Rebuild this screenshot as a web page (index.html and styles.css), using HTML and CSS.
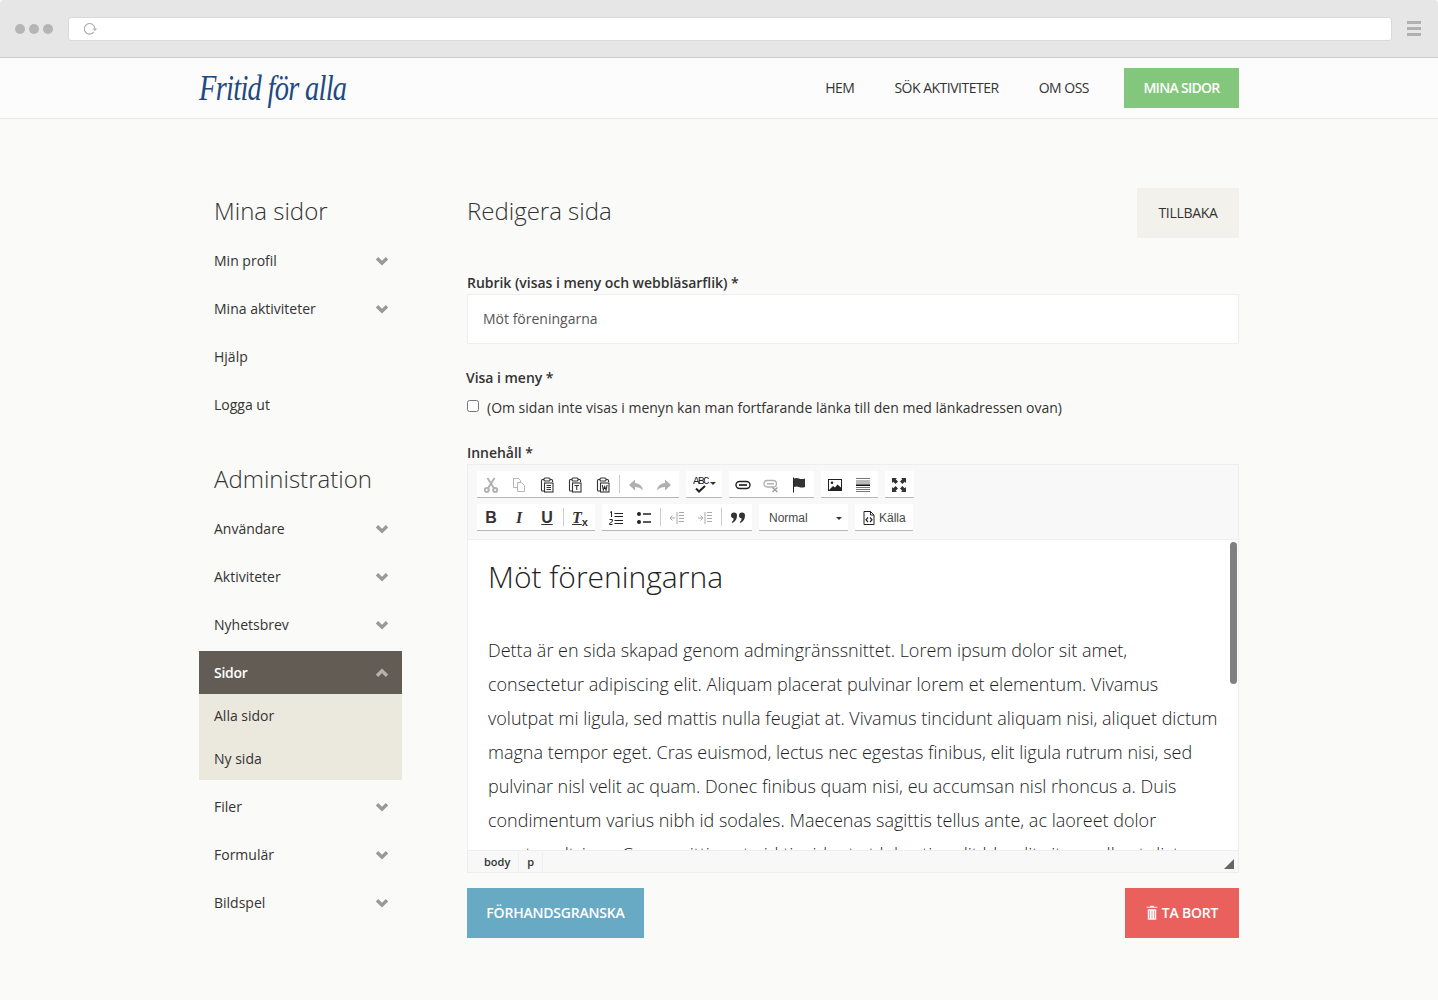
FILE: index.html
```html
<!DOCTYPE html>
<html lang="sv">
<head>
    <meta charset="UTF-8">
    <title>Redigera sida</title>
    <link rel="stylesheet" href="styles.css">
</head>
<body>
    <svg class="sprite" xmlns="http://www.w3.org/2000/svg">
        <symbol id="i-down" viewBox="0 0 14 10"><path d="M2 2.2l5 5 5-5" fill="none" stroke="currentColor" stroke-width="3.4"/></symbol>
        <symbol id="i-up" viewBox="0 0 14 10"><path d="M2 7.8l5-5 5 5" fill="none" stroke="currentColor" stroke-width="3.4"/></symbol>
        <symbol id="i-cut" viewBox="0 0 16 16"><g fill="none" stroke="#b0b0b0" stroke-width="1.9"><circle cx="3.800" cy="13" r="2"/><circle cx="12.200" cy="13" r="2"/><path d="M5 11.200L11.500 1M11 11.200L4.500 1"/></g></symbol>
        <symbol id="i-copy" viewBox="0 0 16 16"><g fill="#fff" stroke="#b5b5b5"><path d="M2.500 1.500h5l2 2v7h-7z"/><path d="M6.500 5.500h4l3 3v6h-7z"/></g></symbol>
        <symbol id="i-paste" viewBox="0 0 16 16"><g fill="none" stroke="#333" stroke-width="1.100"><path d="M5 2.500H3.500q-1 0-1 1V13q0 1 1 1H5M11 2.500h1.500q1 0 1 1V5"/><rect x="5" y="1" width="6" height="3" rx="1"/><rect x="5.500" y="6" width="8.500" height="9"/><path d="M7.500 8.500h4.500M7.500 10.500h4.500M7.500 12.500h4.500"/></g></symbol>
        <symbol id="i-paste-t" viewBox="0 0 16 16"><g fill="none" stroke="#333" stroke-width="1.100"><path d="M5 2.500H3.500q-1 0-1 1V13q0 1 1 1H5M11 2.500h1.500q1 0 1 1V5"/><rect x="5" y="1" width="6" height="3" rx="1"/><rect x="5.500" y="6" width="8.500" height="9"/><path d="M7.500 8.500h4.500M9.750 8.500v4.500"/></g></symbol>
        <symbol id="i-paste-w" viewBox="0 0 16 16"><g fill="none" stroke="#333" stroke-width="1.100"><path d="M5 2.500H3.500q-1 0-1 1V13q0 1 1 1H5M11 2.500h1.500q1 0 1 1V5"/><rect x="5" y="1" width="6" height="3" rx="1"/><rect x="5.500" y="6" width="8.500" height="9"/><path d="M7.300 8l1 5 1.400-3.500L11.100 13l1-5"/></g></symbol>
        <symbol id="i-undo" viewBox="0 0 16 16"><path d="M7 2.500L1 8l6 5.500V10c3 0 5.500.5 8 3.500-.5-4.500-3.500-7-8-7.500z" fill="#b0b0b0"/></symbol>
        <symbol id="i-redo" viewBox="0 0 16 16"><path d="M9 2.500L15 8l-6 5.500V10c-3 0-5.500.5-8 3.500.5-4.500 3.500-7 8-7.500z" fill="#b0b0b0"/></symbol>
        <symbol id="i-link" viewBox="0 0 16 16"><g fill="none" stroke="#222" stroke-width="1.400"><rect x="1" y="4.500" width="14" height="7" rx="3.500"/><path d="M4 8h8" stroke-width="1.700"/></g></symbol>
        <symbol id="i-unlink" viewBox="0 0 16 16"><g fill="none" stroke="#b0b0b0" stroke-width="1.300"><rect x="1" y="3.500" width="12.500" height="6.500" rx="3.200"/><path d="M4 6.800h7" stroke-width="1.500"/><path d="M9.500 10.500l5 4.500M14.500 10.500l-5 4.500" stroke="#999"/></g></symbol>
        <symbol id="i-flag" viewBox="0 0 16 16"><path d="M2.500 .5v15" stroke="#222" fill="none"/><path d="M3 1.500q2.500-1 5 0t6 0v8.500q-3.500 1-6 0t-5 0z" fill="#333"/></symbol>
        <symbol id="i-image" viewBox="0 0 16 16"><rect x="1.500" y="2.500" width="13" height="11" fill="#fff" stroke="#222"/><circle cx="5" cy="5.800" r="1.300" fill="#222"/><path d="M2 13l4-4 2 1.500 2.500-3 4 3.500v2z" fill="#222"/></symbol>
        <symbol id="i-hr" viewBox="0 0 16 16"><path d="M1 1.500h14M1 4h14M1 6h14M1 10.500h14M1 12.500h14M1 14.500h14" stroke="#777" fill="none"/><path d="M1 8.200h14" stroke="#111" stroke-width="1.600" fill="none"/></symbol>
        <symbol id="i-max" viewBox="0 0 16 16"><g fill="#333"><path d="M1 1h5L4.700 2.300 7 4.600 4.600 7 2.300 4.700 1 6zM15 1h-5l1.300 1.300L9 4.600 11.400 7l2.300-2.300L15 6zM1 15h5l-1.300-1.300L7 11.400 4.600 9l-2.300 2.300L1 10zM15 15h-5l1.300-1.300L9 11.400 11.400 9l2.300 2.300L15 10z"/></g></symbol>
        <symbol id="i-ol" viewBox="0 0 16 16"><path d="M6.500 3.500H15M6.500 6.500H15M6.500 10.500H15M6.500 13.500H15" stroke="#222" stroke-width="1.200" fill="none"/><path d="M2 2.500l1.500-1V7M1.500 9.500h2.800v2L1.500 13.500v1h3" stroke="#222" fill="none"/></symbol>
        <symbol id="i-ul" viewBox="0 0 16 16"><circle cx="3" cy="4" r="2" fill="#222"/><circle cx="3" cy="12" r="2" fill="#222"/><path d="M7 4h8M7 12h8" stroke="#222" stroke-width="1.600" fill="none"/></symbol>
        <symbol id="i-outdent" viewBox="0 0 16 16"><path d="M8 2v12M10 2.500h5M10 5.500h5M10 8.500h5M10 11.500h5M1 8h5M3.500 5.500L1 8l2.500 2.500" stroke="#aaa" fill="none"/></symbol>
        <symbol id="i-indent" viewBox="0 0 16 16"><path d="M8 2v12M10 2.500h5M10 5.500h5M10 8.500h5M10 11.500h5M1 8h5M3.500 5.500L6 8l-2.500 2.500" stroke="#aaa" fill="none"/></symbol>
        <symbol id="i-quote" viewBox="0 0 16 16"><path d="M1 5.500a3 3 0 1 1 6 0q0 5-4.500 7.500l-.7-1q1.700-1.500 1.900-3.600A3 3 0 0 1 1 5.500zM9 5.500a3 3 0 1 1 6 0q0 5-4.500 7.500l-.7-1q1.700-1.500 1.900-3.600A3 3 0 0 1 9 5.500z" fill="#333"/></symbol>
        <symbol id="i-source" viewBox="0 0 16 16"><path d="M3 1.500h6.500l3.500 3.500v9.500H3z" fill="#fff" stroke="#222"/><path d="M9.500 1.500V5H13" fill="none" stroke="#222"/><path d="M7 7.500L5 9.800l2 2.200M9 7.500l2 2.300L9 12" fill="none" stroke="#222" stroke-width="1.200"/></symbol>
    </svg>

    <div class="chrome">
        <span class="dots"><i></i><i></i><i></i></span>
        <div class="urlbar">
            <svg class="reload" width="15" height="14" viewBox="0 0 15 14"><path d="M9.700 10.200A5.300 5.300 0 1 1 10.900 6.500" fill="none" stroke="#aaa" stroke-width="1.100"/><path d="M8.700 6.500h4.400L10.900 9z" fill="#aaa"/></svg>
        </div>
        <span class="burger"><i></i><i></i><i></i></span>
    </div>

    <header class="site-header">
        <div class="wrap header-row">
            <a class="logo">Fritid för alla</a>
            <nav class="top-nav">
                <a>HEM</a>
                <a>SÖK AKTIVITETER</a>
                <a>OM OSS</a>
                <a class="btn btn-green">MINA SIDOR</a>
            </nav>
        </div>
    </header>

    <div class="wrap page">
        <aside class="sidebar">
            <h2>Mina sidor</h2>
            <ul class="side-menu">
                <li>Min profil <svg class="chev"><use href="#i-down"/></svg></li>
                <li>Mina aktiviteter <svg class="chev"><use href="#i-down"/></svg></li>
                <li>Hjälp</li>
                <li>Logga ut</li>
            </ul>
            <h2 class="admin-title">Administration</h2>
            <ul class="side-menu">
                <li>Användare <svg class="chev"><use href="#i-down"/></svg></li>
                <li>Aktiviteter <svg class="chev"><use href="#i-down"/></svg></li>
                <li>Nyhetsbrev <svg class="chev"><use href="#i-down"/></svg></li>
                <li class="active">Sidor <svg class="chev"><use href="#i-up"/></svg></li>
                <li class="sub-item">Alla sidor</li>
                <li class="sub-item last">Ny sida</li>
                <li>Filer <svg class="chev"><use href="#i-down"/></svg></li>
                <li>Formulär <svg class="chev"><use href="#i-down"/></svg></li>
                <li>Bildspel <svg class="chev"><use href="#i-down"/></svg></li>
            </ul>
        </aside>

        <main class="content">
            <div class="title-row">
                <h1>Redigera sida</h1>
                <a class="btn btn-back">TILLBAKA</a>
            </div>

            <label class="field-label">Rubrik (visas i meny och webbläsarflik) *</label>
            <input class="text-input" type="text" value="Möt föreningarna">

            <label class="field-label visa-label">Visa i meny *</label>
            <div class="check-row">
                <input type="checkbox">
                <span>(Om sidan inte visas i menyn kan man fortfarande länka till den med länkadressen ovan)</span>
            </div>

            <label class="field-label inner-label">Innehåll *</label>
            <div class="editor">
                <div class="toolbar">
                    <div class="tool-row">
                        <div class="tool-group">
                            <span class="tool"><svg><use href="#i-cut"/></svg></span>
                            <span class="tool"><svg><use href="#i-copy"/></svg></span>
                            <span class="tool"><svg><use href="#i-paste"/></svg></span>
                            <span class="tool"><svg><use href="#i-paste-t"/></svg></span>
                            <span class="tool"><svg><use href="#i-paste-w"/></svg></span>
                            <span class="sep"></span>
                            <span class="tool"><svg><use href="#i-undo"/></svg></span>
                            <span class="tool"><svg><use href="#i-redo"/></svg></span>
                        </div>
                        <div class="tool-group spell">
                            <span class="abc">ABC</span>
                            <svg class="check" width="16" height="8" viewBox="0 0 16 8"><path d="M2 3.500l3 3 6-5.500" fill="none" stroke="#222" stroke-width="2"/></svg>
                            <span class="caret"></span>
                        </div>
                        <div class="tool-group">
                            <span class="tool"><svg><use href="#i-link"/></svg></span>
                            <span class="tool"><svg><use href="#i-unlink"/></svg></span>
                            <span class="tool"><svg><use href="#i-flag"/></svg></span>
                        </div>
                        <div class="tool-group">
                            <span class="tool"><svg><use href="#i-image"/></svg></span>
                            <span class="tool"><svg><use href="#i-hr"/></svg></span>
                        </div>
                        <div class="tool-group">
                            <span class="tool"><svg><use href="#i-max"/></svg></span>
                        </div>
                    </div>
                    <div class="tool-row">
                        <div class="tool-group">
                            <span class="tool fmt"><b>B</b></span>
                            <span class="tool fmt"><b class="ital">I</b></span>
                            <span class="tool fmt"><b class="under">U</b></span>
                            <span class="sep"></span>
                            <span class="tool fmt"><b class="ital under">T</b><b class="sub-x">x</b></span>
                        </div>
                        <div class="tool-group lists">
                            <span class="tool"><svg><use href="#i-ol"/></svg></span>
                            <span class="tool"><svg><use href="#i-ul"/></svg></span>
                            <span class="sep"></span>
                            <span class="tool"><svg><use href="#i-outdent"/></svg></span>
                            <span class="tool"><svg><use href="#i-indent"/></svg></span>
                            <span class="sep"></span>
                            <span class="tool"><svg><use href="#i-quote"/></svg></span>
                        </div>
                        <div class="tool-group combo">
                            <span>Normal</span>
                            <span class="caret"></span>
                        </div>
                        <div class="tool-group source">
                            <svg><use href="#i-source"/></svg>
                            <span>Källa</span>
                        </div>
                    </div>
                </div>
                <div class="edit-area">
                    <h2>Möt föreningarna</h2>
                    <p>Detta är en sida skapad genom admingränssnittet. Lorem ipsum dolor sit amet, consectetur adipiscing elit. Aliquam placerat pulvinar lorem et elementum. Vivamus volutpat mi ligula, sed mattis nulla feugiat at. Vivamus tincidunt aliquam nisi, aliquet dictum magna tempor eget. Cras euismod, lectus nec egestas finibus, elit ligula rutrum nisi, sed pulvinar nisl velit ac quam. Donec finibus quam nisi, eu accumsan nisl rhoncus a. Duis condimentum varius nibh id sodales. Maecenas sagittis tellus ante, ac laoreet dolor egestas ultrices. Cras sagittis ante id tincidunt at lobortis velit blandit vitae nulla et dictum.</p>
                    <span class="scroll-thumb"></span>
                </div>
                <div class="status-bar">
                    <span class="crumb">body</span>
                    <span class="crumb">p</span>
                    <span class="resize"></span>
                </div>
            </div>

            <div class="action-row">
                <a class="btn btn-blue">FÖRHANDSGRANSKA</a>
                <a class="btn btn-red">
                    <svg width="12" height="15" viewBox="0 0 12 15"><path d="M4 1.500V.500h4v1h3.500v1.500H.500V1.500zM1.500 4h9v10q0 1-1 1h-7q-1 0-1-1zM3.500 5.500v8M6 5.500v8M8.500 5.500v8" fill="#fff" stroke="#e9605d" stroke-width=".6"/></svg>
                    TA BORT
                </a>
            </div>
        </main>
    </div>
</body>
</html>
```

FILE: styles.css
```css
* {
    box-sizing: border-box;
}

body {
    margin: 0;
    background-color: #fafaf8;
    color: #333;
    font-family: "Open Sans", "Liberation Sans", sans-serif;
    font-size: 14px;
}

.sprite {
    display: none;
}

.wrap {
    width: 1040px;
    margin: 0 auto;
}

/* browser frame */
.chrome {
    display: flex;
    align-items: center;
    height: 58px;
    padding: 0 17px 0 15px;
    background-color: #e6e6e6;
    border-bottom: 1px solid #ccc;
    border-radius: 4px 4px 0 0;
}

.dots {
    display: flex;
    gap: 4px;
    margin-right: 15px;
}

.dots i {
    width: 10px;
    height: 10px;
    border-radius: 50%;
    background-color: #b5b5b5;
}

.urlbar {
    flex: 1;
    display: flex;
    align-items: center;
    height: 24px;
    margin-top: 1px;
    padding-left: 15px;
    background-color: #fff;
    border: 1px solid #dadada;
    border-radius: 3px;
}

.burger {
    display: flex;
    flex-direction: column;
    gap: 3px;
    width: 14px;
    margin-left: 15px;
}

.burger i {
    height: 3px;
    background-color: #b0b0b0;
}

/* header */
.site-header {
    height: 61px;
    background-color: #fcfcfc;
    border-bottom: 1px solid #e8e8e8;
}

.header-row {
    display: flex;
    justify-content: space-between;
    align-items: center;
    height: 60px;
}

.logo {
    color: #1f4a80;
    font-family: "Liberation Serif", serif;
    font-style: italic;
    font-size: 36px;
    letter-spacing: -0.9px;
    white-space: nowrap;
    transform: scaleX(0.79);
    transform-origin: left center;
}

.top-nav {
    display: flex;
    align-items: center;
}

.top-nav a {
    padding: 0 20px 2px;
    letter-spacing: -0.5px;
}

.btn {
    display: flex;
    align-items: center;
    justify-content: center;
    padding-bottom: 2px;
}

.top-nav .btn-green {
    height: 40px;
    width: 115px;
    margin-left: 15px;
    padding: 0 0 2px;
    background-color: #82c77b;
    color: #fff;
    font-weight: 600;
    letter-spacing: -0.7px;
}

/* page */
.page {
    display: flex;
    padding-top: 69px;
}

.sidebar {
    width: 203px;
    margin-right: 65px;
}

.sidebar h2 {
    margin: 0 0 5px 15px;
    font-size: 24px;
    font-weight: 300;
    line-height: 46px;
    color: #333;
}

.sidebar .admin-title {
    margin-top: 30px;
}

.side-menu {
    list-style: none;
    margin: 0;
    padding: 0;
}

.side-menu li {
    display: flex;
    justify-content: space-between;
    align-items: center;
    height: 43px;
    margin-bottom: 5px;
    padding: 0 13px 0 15px;
}

.chev {
    width: 14px;
    height: 10px;
    color: #999;
}

.side-menu .active {
    margin-bottom: 0;
    background-color: #625c54;
    color: #fff;
    font-weight: 600;
    letter-spacing: -0.3px;
}

.active .chev {
    color: #b5b2ad;
}

.side-menu .sub-item {
    margin-bottom: 0;
    background-color: #ebe8de;
}

.side-menu .last {
    margin-bottom: 5px;
}

/* content */
.content {
    width: 772px;
}

.title-row {
    display: flex;
    justify-content: space-between;
    align-items: center;
    height: 50px;
}

.title-row h1 {
    margin: 0 0 6px;
    font-size: 24px;
    font-weight: 300;
    color: #333;
}

.btn-back {
    width: 102px;
    height: 50px;
    background-color: #f3f1ec;
    letter-spacing: -0.3px;
}

.field-label {
    display: block;
    margin-top: 35px;
    font-weight: 600;
    line-height: 20px;
    letter-spacing: -0.03px;
}

.text-input {
    display: block;
    width: 100%;
    height: 50px;
    margin-top: 1px;
    padding: 0 15px 2px;
    background-color: #fff;
    border: 1px solid #eee;
    color: #555;
    font: inherit;
}

.visa-label {
    margin-top: 24px;
    margin-left: -1px;
}

.check-row {
    display: flex;
    align-items: center;
    height: 20px;
    margin-top: 10px;
    padding-bottom: 2px;
}

.check-row input {
    width: 12px;
    height: 12px;
    margin: 0 8px 2px 0;
}

.inner-label {
    margin-top: 25px;
}

/* editor */
.editor {
    margin-top: 1px;
    background-color: #fff;
    border: 1px solid #eee;
}

.toolbar {
    height: 75px;
    padding: 6px 0 0 9px;
    background-color: #f8f8f8;
    border-bottom: 1px solid #eee;
}

.tool-row {
    display: flex;
    gap: 7px;
    height: 27px;
    margin-bottom: 6px;
}

.tool-group {
    display: flex;
    align-items: center;
    padding-right: 1px;
    background-color: #fff;
    border-bottom: 1px solid #b6b6b6;
}

.tool {
    display: flex;
    align-items: center;
    justify-content: center;
    width: 28px;
    height: 26px;
    padding-top: 2px;
}

.tool svg {
    width: 16px;
    height: 16px;
}

.sep {
    width: 1px;
    height: 18px;
    margin: 0 2px;
    background-color: #ccc;
}

.lists {
    padding-right: 0;
}

.spell {
    position: relative;
    width: 36px;
}

.abc {
    position: absolute;
    left: 7px;
    top: 4px;
    color: #222;
    font-family: "Liberation Mono", monospace;
    font-size: 11px;
    letter-spacing: -1.6px;
}

.check {
    position: absolute;
    left: 8px;
    top: 14px;
}

.caret {
    width: 0;
    height: 0;
    border-top: 3px solid #333;
    border-left: 3px solid transparent;
    border-right: 3px solid transparent;
}

.spell .caret {
    position: absolute;
    left: 24px;
    top: 11px;
}

.fmt {
    color: #333;
    font-family: "Liberation Sans", sans-serif;
    font-size: 16px;
}

.ital {
    font-family: "Liberation Serif", serif;
    font-style: italic;
}

.under {
    text-decoration: underline;
}

.sub-x {
    margin-top: 8px;
    font-size: 11px;
}

.combo {
    justify-content: space-between;
    width: 89px;
    padding: 2px 6px 0 10px;
    color: #484848;
    font-family: "Liberation Sans", sans-serif;
    font-size: 12px;
}

.source {
    gap: 2px;
    width: 58px;
    padding: 2px 0 0 6px;
    color: #484848;
    font-family: "Liberation Sans", sans-serif;
    font-size: 12px;
}

.source svg {
    width: 16px;
    height: 16px;
}

.edit-area {
    position: relative;
    height: 310px;
    padding: 19px 20px 0;
    overflow: hidden;
    color: #222;
    font-size: 18px;
    font-weight: 300;
}

.edit-area h2 {
    margin: 0 0 38px;
    font-size: 30px;
    font-weight: 300;
    line-height: 36px;
}

.edit-area p {
    margin: 0;
    line-height: 34px;
}

.scroll-thumb {
    position: absolute;
    top: 2px;
    right: 1px;
    width: 7px;
    height: 142px;
    background-color: #808080;
    border-radius: 4px;
}

.status-bar {
    position: relative;
    display: flex;
    height: 22px;
    padding: 1px 0 0 8px;
    background-color: #f8f8f8;
    border-top: 1px solid #eee;
    font-size: 11px;
    font-weight: 600;
    line-height: 20px;
}

.crumb {
    padding: 0 8px;
    border-right: 1px solid #eee;
}

.resize {
    position: absolute;
    right: 4px;
    bottom: 3px;
    width: 0;
    height: 0;
    border-bottom: 10px solid #666;
    border-left: 10px solid transparent;
}

.action-row {
    display: flex;
    justify-content: space-between;
    margin-top: 15px;
}

.action-row .btn {
    height: 50px;
    color: #fff;
    font-weight: 600;
}

.btn-blue {
    width: 177px;
    background-color: #68a9c4;
    letter-spacing: -0.2px;
}

.btn-red {
    gap: 4px;
    width: 114px;
    background-color: #e9605d;
    letter-spacing: -0.2px;
}
```
